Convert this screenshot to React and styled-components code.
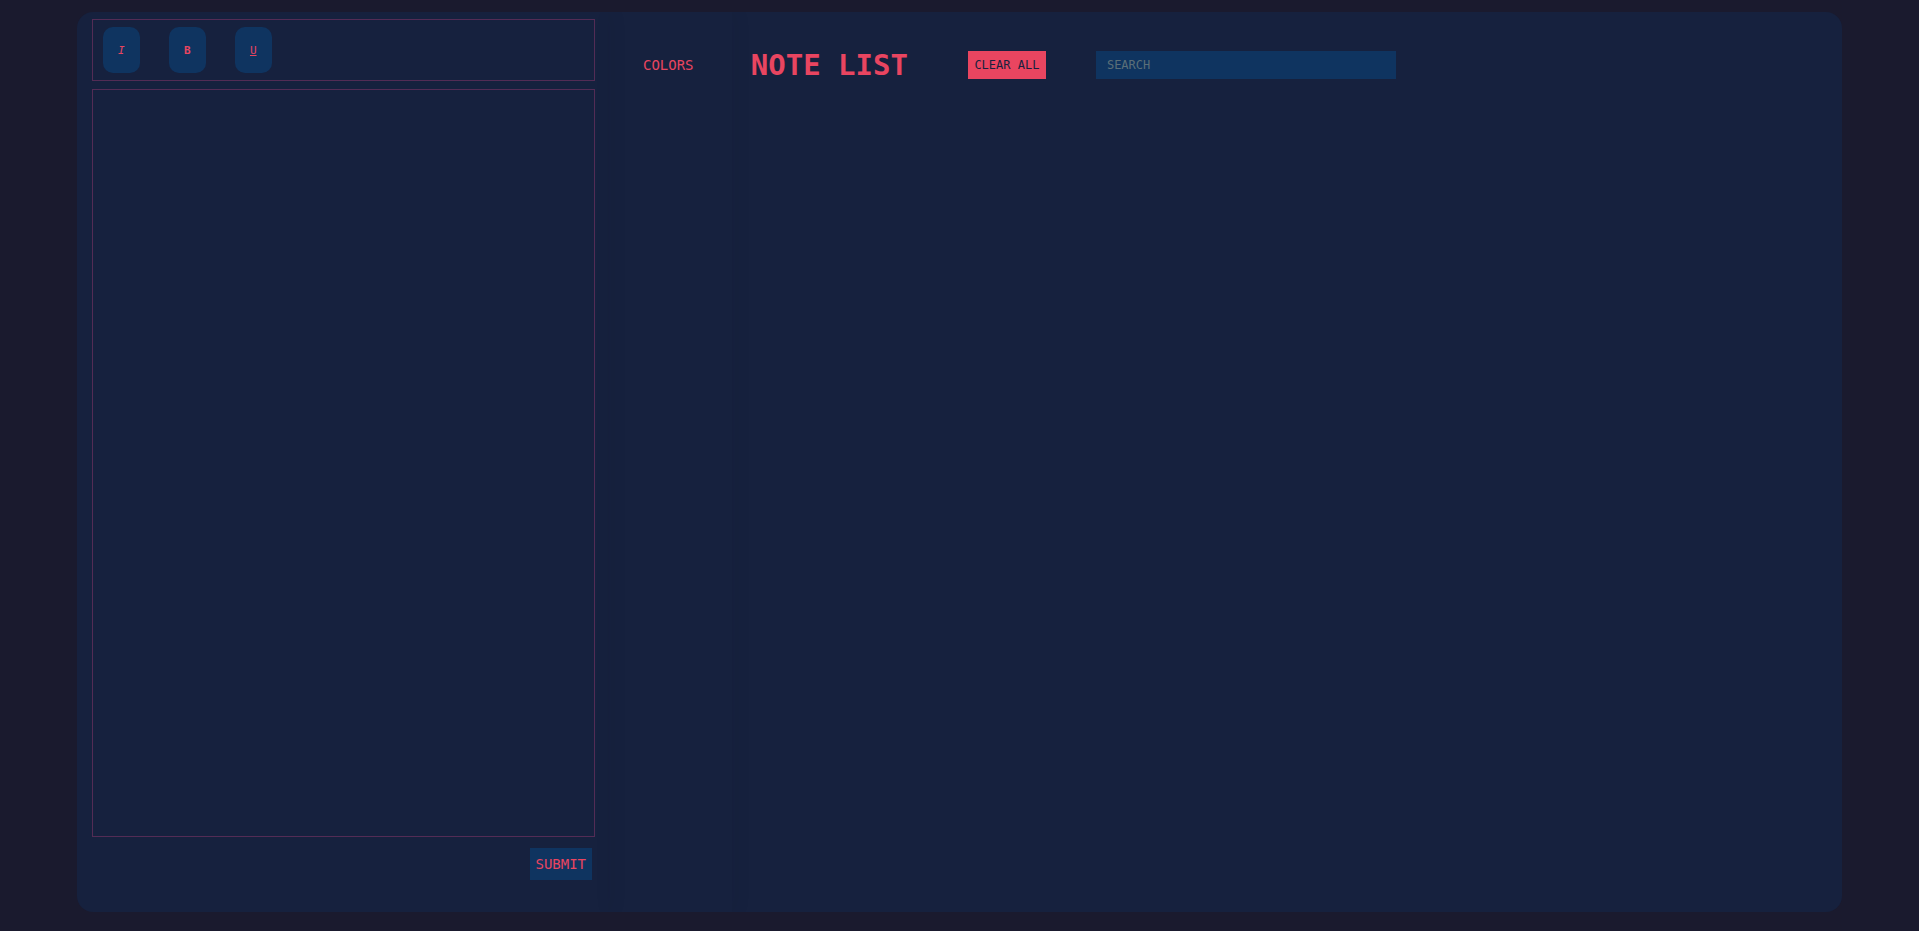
import React from "react";
import styled, { createGlobalStyle } from "styled-components";

const GlobalStyle = createGlobalStyle`
    body {
        margin: 0;
        background-color: #1a1a2e;
        font-family: "DejaVu Sans Mono", "Liberation Mono", monospace;
    }
`;

const App = () => {
    return (
        <>
            <GlobalStyle />
            <AppBlock>
                <EditorPanel>
                    <Toolbar>
                        <StyleButton kind="italic">I</StyleButton>
                        <StyleButton kind="bold">B</StyleButton>
                        <StyleButton kind="underline">U</StyleButton>
                    </Toolbar>
                    <EditorArea contentEditable suppressContentEditableWarning />
                    <SubmitRow>
                        <SubmitButton>SUBMIT</SubmitButton>
                    </SubmitRow>
                </EditorPanel>
                <ColorsColumn>
                    <ColorsLabel>COLORS</ColorsLabel>
                </ColorsColumn>
                <NoteListPanel>
                    <NoteHeader>
                        <h1>NOTE LIST</h1>
                        <ClearButton>CLEAR ALL</ClearButton>
                        <SearchInput type="text" placeholder="SEARCH" />
                    </NoteHeader>
                </NoteListPanel>
            </AppBlock>
        </>
    );
};

const AppBlock = styled.div`
    width: 92%;
    height: 900px;
    margin: 12px auto 0;
    background-color: #16213e;
    border-radius: 16px;
    display: flex;
    overflow: hidden;
`;

const EditorPanel = styled.div`
    width: 531px;
    box-sizing: border-box;
    padding: 7px 13px 0 15px;
    display: flex;
    flex-direction: column;
    box-shadow: 3px 0 18px rgba(10, 14, 35, 0.06);
`;

const Toolbar = styled.div`
    height: 62px;
    box-sizing: border-box;
    border: 1px solid #532c55;
    padding: 7px 10px;
    display: flex;
    gap: 29px;
`;

const StyleButton = styled.button`
    width: 37px;
    height: 46px;
    border: none;
    border-radius: 10px;
    background-color: #0f3460;
    color: #e94560;
    font-family: inherit;
    font-size: 11px;
    padding: 0;
    cursor: pointer;
    font-style: ${(props) => (props.kind === "italic" ? "italic" : "normal")};
    font-weight: ${(props) => (props.kind === "bold" ? "bold" : "normal")};
    text-decoration: ${(props) =>
        props.kind === "underline" ? "underline" : "none"};
`;

const EditorArea = styled.div`
    margin-top: 8px;
    height: 748px;
    box-sizing: border-box;
    border: 1px solid #532c55;
    outline: none;
    color: #e94560;
`;

const SubmitRow = styled.div`
    display: flex;
    justify-content: flex-end;
    padding-right: 3px;
    margin-top: 11px;
`;

const SubmitButton = styled.button`
    width: 62px;
    height: 32px;
    border: none;
    background-color: #0f3460;
    color: #e94560;
    font-family: inherit;
    font-size: 14px;
    padding: 0;
    cursor: pointer;
`;

const ColorsColumn = styled.div`
    width: 124px;
    display: flex;
    justify-content: center;
    padding-top: 41px;
    box-sizing: border-box;
    box-shadow: 3px 0 18px rgba(10, 14, 35, 0.06);
`;

const ColorsLabel = styled.span`
    color: #e94560;
    font-size: 14px;
    line-height: 24px;
    height: 24px;
    margin-left: -3px;
`;

const NoteListPanel = styled.div`
    flex: 1;
    padding: 39px 0 0 19px;
`;

const NoteHeader = styled.div`
    display: flex;
    align-items: center;
    height: 28px;
    h1 {
        margin: 0 60px 0 0;
        color: #e94560;
        font-size: 29px;
        font-weight: bold;
        line-height: 28px;
    }
`;

const ClearButton = styled.button`
    width: 78px;
    height: 28px;
    border: none;
    background-color: #e94560;
    color: #16213e;
    font-family: inherit;
    font-size: 12px;
    padding: 0;
    margin-right: 50px;
    cursor: pointer;
`;

const SearchInput = styled.input`
    width: 300px;
    height: 28px;
    box-sizing: border-box;
    border: none;
    outline: none;
    background-color: #0f3460;
    color: #e94560;
    padding: 0 11px;
    font-family: inherit;
    font-size: 12px;
    &::placeholder {
        color: #5b6f78;
    }
`;

export default App;
